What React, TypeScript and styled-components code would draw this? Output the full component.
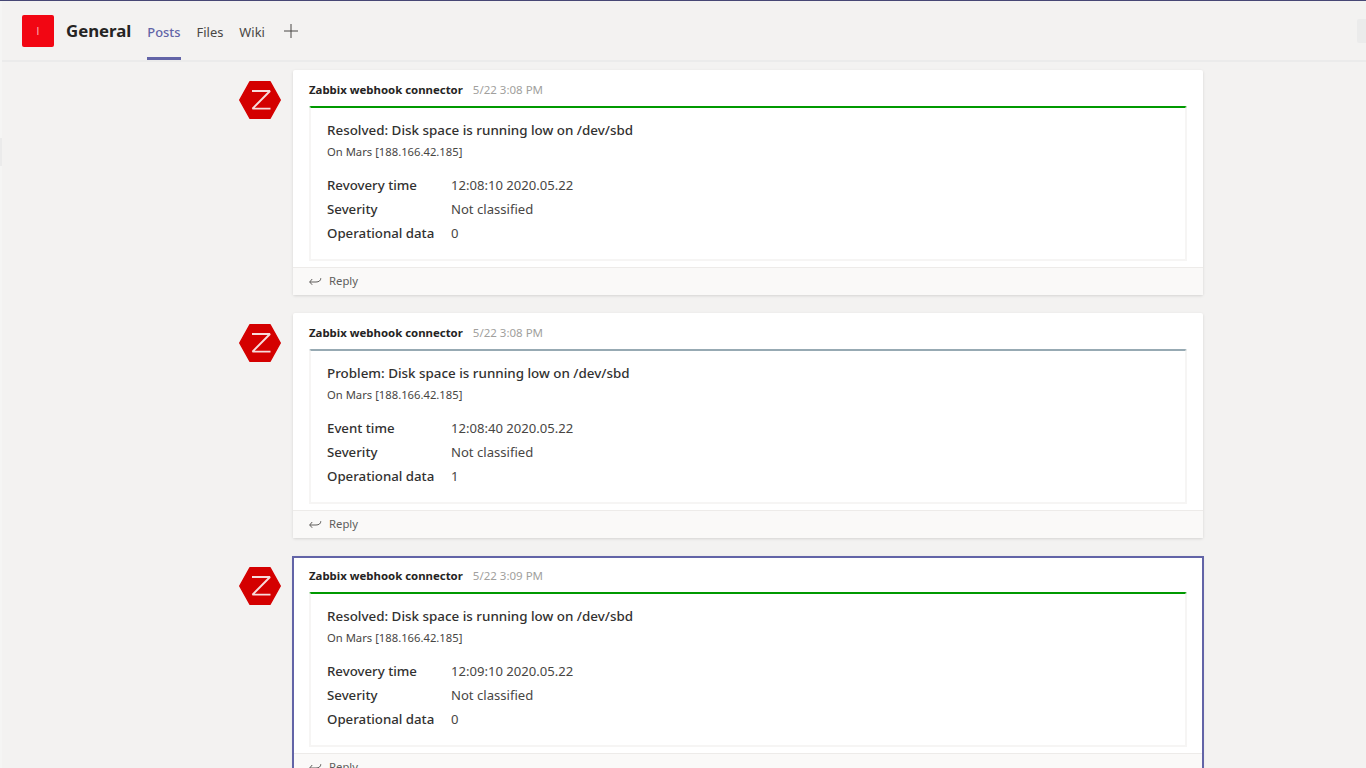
import React from "react";
import styled, { createGlobalStyle } from "styled-components";

const GlobalStyle = createGlobalStyle`
  html, body {
    margin: 0;
    padding: 0;
    height: 100%;
    overflow: hidden;
    background: #f3f2f1;
  }
  * { box-sizing: border-box; }
`;

const Page = styled.div`
  position: relative;
  width: 1366px;
  height: 768px;
  overflow: hidden;
  background: #f3f2f1;
  border-top: 1px solid #464775;
  font-family: "Noto Sans", "Open Sans", sans-serif;
  color: #252423;
`;

const Header = styled.header`
  display: flex;
  align-items: stretch;
  height: 61px;
  padding-left: 22px;
  border-bottom: 2px solid #ebebeb;
`;

const TeamLogo = styled.div`
  display: flex;
  align-items: center;
  justify-content: center;
  width: 32px;
  height: 32px;
  margin-top: 14px;
  border-radius: 2px;
  background: #f20613;
  color: #f9b9b9;
  font-family: "Liberation Sans", sans-serif;
  font-size: 10px;
`;

const ChannelName = styled.h1`
  margin: 17px 16px 0 12px;
  font-size: 16.8px;
  line-height: 26px;
  font-weight: 700;
  color: #252423;
`;

const Tabs = styled.nav`
  display: flex;
  gap: 16px;
`;

const Tab = styled.a<{ $active?: boolean }>`
  display: block;
  height: 59px;
  margin-bottom: -1px;
  padding-top: 21px;
  font-size: 12.9px;
  line-height: 20px;
  font-weight: ${(p) => (p.$active ? 500 : 400)};
  color: ${(p) => (p.$active ? "#6264a7" : "#484644")};
  border-bottom: 3px solid ${(p) => (p.$active ? "#6264a7" : "transparent")};
`;

const AddTab = styled.svg`
  width: 16px;
  height: 16px;
  margin: 22px 0 0 2px;
`;

const EdgeStrip = styled.div`
  position: absolute;
  left: 0;
  top: 0;
  width: 2px;
  height: 100%;
  background: #f5f5f4;
`;

const EdgeTabLeft = styled.div`
  position: absolute;
  left: 0;
  top: 137px;
  width: 2px;
  height: 28px;
  background: #ebebeb;
`;

const EdgeTabRight = styled.div`
  position: absolute;
  right: 0;
  top: 18px;
  width: 9px;
  height: 24px;
  border-radius: 2px 0 0 2px;
  background: #ebebeb;
`;

const Feed = styled.main`
  display: flex;
  flex-direction: column;
  gap: 18px;
  width: 965px;
  margin-left: 239px;
  padding-top: 8px;
`;

const Message = styled.article`
  display: flex;
  gap: 12px;
`;

const AvatarBox = styled.svg`
  flex: none;
  width: 42px;
  height: 38px;
  margin-top: 11px;
`;

const Card = styled.div<{ $selected?: boolean }>`
  position: relative;
  flex: none;
  width: 910px;
  height: 225px;
  border-radius: 2px;
  background: #fff;
  box-shadow: 0 1px 3px rgba(0, 0, 0, 0.13);
  ${(p) =>
    p.$selected &&
    `
    height: 243px;
    &::after {
      content: "";
      position: absolute;
      inset: 0 -1px;
      border: 2px solid #6264a7;
      pointer-events: none;
    }
  `}
`;

const MetaRow = styled.div`
  display: flex;
  align-items: baseline;
  gap: 10px;
  height: 36px;
  padding: 10px 0 0 16px;
`;

const Author = styled.span`
  font-size: 11.4px;
  line-height: 20px;
  font-weight: 700;
  color: #252423;
`;

const Timestamp = styled.span`
  font-size: 11.5px;
  line-height: 20px;
  color: #a19f9d;
`;

const Attachment = styled.section<{ $accent: string }>`
  height: 155px;
  margin: 0 16px;
  padding: 12px 16px 0;
  border: 2px solid #f6f5f4;
  border-top: 2px solid ${(p) => p.$accent};
  border-radius: 2px 2px 0 0;
`;

const Title = styled.div`
  font-size: 13.4px;
  line-height: 20px;
  font-weight: 500;
  color: #323130;
`;

const Subtitle = styled.div`
  margin-top: 4px;
  font-size: 11.25px;
  line-height: 16px;
  color: #484644;
`;

const Facts = styled.div`
  display: grid;
  grid-template-columns: 124px 1fr;
  grid-auto-rows: 24px;
  margin-top: 13px;
  line-height: 24px;
`;

const FactName = styled.div`
  font-size: 13.25px;
  font-weight: 500;
  color: #323130;
`;

const FactValue = styled.div`
  font-size: 13.1px;
  color: #484644;
`;

const ReplyBar = styled.div`
  display: flex;
  align-items: center;
  gap: 7px;
  height: 28px;
  margin-top: 6px;
  padding: 0 0 2px 16px;
  background: #faf9f8;
  border-top: 1px solid #edebe9;
  font-size: 11.3px;
  color: #605e5c;
`;

const ReplyIcon = styled.svg`
  width: 13px;
  height: 10px;
  margin-top: 2px;
`;

const ZabbixAvatar = () => (
  <AvatarBox viewBox="0 0 42 38">
    <path d="M11 0.7H31L41.3 19L31 37.3H11L0.7 19Z" fill="#d40000" stroke="#d40000" strokeWidth="1.4" strokeLinejoin="round" />
    <path d="M13 10H31L13.5 27.6H31.5" fill="none" stroke="#f7dcdc" strokeWidth="1.9" strokeLinejoin="bevel" />
  </AvatarBox>
);

interface Fact {
  name: string;
  value: string;
}

interface Post {
  time: string;
  accent: string;
  title: string;
  facts: Fact[];
  selected?: boolean;
}

const posts: Post[] = [
  {
    time: "5/22 3:08 PM",
    accent: "#009900",
    title: "Resolved: Disk space is running low on /dev/sbd",
    facts: [
      { name: "Revovery time", value: "12:08:10 2020.05.22" },
      { name: "Severity", value: "Not classified" },
      { name: "Operational data", value: "0" },
    ],
  },
  {
    time: "5/22 3:08 PM",
    accent: "#97aab3",
    title: "Problem: Disk space is running low on /dev/sbd",
    facts: [
      { name: "Event time", value: "12:08:40 2020.05.22" },
      { name: "Severity", value: "Not classified" },
      { name: "Operational data", value: "1" },
    ],
  },
  {
    time: "5/22 3:09 PM",
    accent: "#009900",
    title: "Resolved: Disk space is running low on /dev/sbd",
    selected: true,
    facts: [
      { name: "Revovery time", value: "12:09:10 2020.05.22" },
      { name: "Severity", value: "Not classified" },
      { name: "Operational data", value: "0" },
    ],
  },
];

const App = () => (
  <Page>
    <GlobalStyle />
    <EdgeStrip />
    <Header>
      <TeamLogo>I</TeamLogo>
      <ChannelName>General</ChannelName>
      <Tabs>
        <Tab $active>Posts</Tab>
        <Tab>Files</Tab>
        <Tab>Wiki</Tab>
        <AddTab viewBox="0 0 16 16">
          <path d="M8 1V15M1 8H15" stroke="#484644" strokeWidth="1" fill="none" />
        </AddTab>
      </Tabs>
    </Header>
    <EdgeTabLeft />
    <EdgeTabRight />
    <Feed>
      {posts.map((post, i) => (
        <Message key={i}>
          <ZabbixAvatar />
          <Card $selected={post.selected}>
            <MetaRow>
              <Author>Zabbix webhook connector</Author>
              <Timestamp>{post.time}</Timestamp>
            </MetaRow>
            <Attachment $accent={post.accent}>
              <Title>{post.title}</Title>
              <Subtitle>On Mars [188.166.42.185]</Subtitle>
              <Facts>
                {post.facts.map((fact) => (
                  <React.Fragment key={fact.name}>
                    <FactName>{fact.name}</FactName>
                    <FactValue>{fact.value}</FactValue>
                  </React.Fragment>
                ))}
              </Facts>
            </Attachment>
            <ReplyBar>
              <ReplyIcon viewBox="0 0 13 10">
                <path d="M3.2 2L0.7 5L3.2 7.8M0.7 5H7C10 5 11.8 3.6 11.8 1.2" fill="none" stroke="#605e5c" strokeWidth="1" />
              </ReplyIcon>
              Reply
            </ReplyBar>
          </Card>
        </Message>
      ))}
    </Feed>
  </Page>
);

export default App;
